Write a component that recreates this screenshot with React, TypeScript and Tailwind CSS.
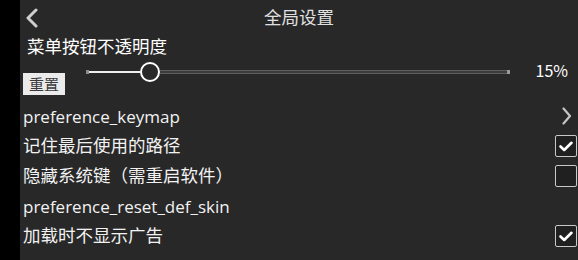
import React from 'react';

const FONT = { fontFamily: '"Open Sans", "Noto Sans CJK SC", sans-serif' };

type RowKind = 'arrow' | 'checked' | 'unchecked' | 'none';

interface PrefRow {
  id: string;
  label: string;
  kind: RowKind;
}

const ROWS: PrefRow[] = [
  { id: 'keymap', label: 'preference_keymap', kind: 'arrow' },
  { id: 'path', label: '记住最后使用的路径', kind: 'checked' },
  { id: 'syskey', label: '隐藏系统键（需重启软件）', kind: 'unchecked' },
  { id: 'skin', label: 'preference_reset_def_skin', kind: 'none' },
  { id: 'ads', label: '加载时不显示广告', kind: 'checked' },
];

const CheckBox = ({ checked }: { checked: boolean }) => (
  <div className="flex h-[22px] w-[22px] items-center justify-center rounded-[2px] border-[1.5px] border-[#c8c8c8] bg-[#202020]">
    {checked && (
      <svg width="14" height="11" viewBox="0 0 14 11" fill="none">
        <path d="M1.5 5.5 L5.2 9 L12.5 1.8" stroke="#ffffff" strokeWidth="2.6" strokeLinecap="round" strokeLinejoin="round" />
      </svg>
    )}
  </div>
);

const renderControl = (kind: RowKind) => {
  if (kind === 'arrow')
    return (
      <svg width="10" height="18" viewBox="0 0 10 18" fill="none" className="mr-[5px]">
        <path d="M1.5 1.5 L8 9 L1.5 16.5" stroke="#c4c4c4" strokeWidth="2.2" strokeLinecap="round" strokeLinejoin="round" />
      </svg>
    );
  if (kind === 'checked') return <CheckBox checked />;
  if (kind === 'unchecked') return <CheckBox checked={false} />;
  return null;
};

export default function App() {
  return (
    <div className="flex h-[260px] w-[578px] overflow-hidden bg-black text-[#f2f2f2]" style={FONT}>
      <div className="w-[20px] shrink-0 bg-black" />
      <div className="flex flex-1 flex-col bg-[#282828]">
        {/* header */}
        <div className="grid h-[35px] grid-cols-[40px_1fr_40px] items-center">
          <div className="pl-[5px] pt-[1px]">
            <svg width="14" height="20" viewBox="0 0 14 20" fill="none">
              <path d="M11 2 L3 10 L11 18" stroke="#cfcfcf" strokeWidth="3" strokeLinecap="round" strokeLinejoin="round" />
            </svg>
          </div>
          <div className="text-center text-[17.5px] leading-none text-[#e0e0e0]">全局设置</div>
          <div />
        </div>

        {/* opacity label */}
        <div className="pl-[7px] text-[17.5px] leading-[22px] text-white">菜单按钮不透明度</div>

        {/* slider row */}
        <div className="flex h-[44px] items-start pl-[3px]">
          <button className="mt-[16px] h-[22px] w-[42px] bg-[#ebebeb] text-[15px] leading-[22px] text-[#3a3a3a]">
            重置
          </button>
          <div className="ml-[21px] mt-[5px] flex h-[20px] w-[424px] items-center">
            <div className="h-[4px] w-[3px] bg-[#8a8a8a]" />
            <div className="h-[2px] w-[51px] bg-[#f0f0f0]" />
            <div className="h-[20px] w-[20px] shrink-0 rounded-full border-[2.5px] border-white bg-[#282828]" />
            <div className="h-[4px] flex-1 border-y border-[#5e5e5e] bg-[#3c3c3c]" />
            <div className="h-[4px] w-[3px] bg-[#9a9a9a]" />
          </div>
          <div
            className="ml-auto mr-[10px] mt-[2px] text-[16px] leading-[22px] text-white"
            style={{ fontFamily: '"Noto Sans CJK SC", "Noto Sans", sans-serif' }}
          >
            15%
          </div>
        </div>

        {/* preference rows */}
        <div className="flex flex-col">
          {ROWS.map((row) => (
            <div key={row.id} className="flex h-[30px] items-center justify-between pl-[3px] pr-[1px]">
              <span className={/^[\x00-\x7f]+$/.test(row.label) ? 'text-[17px] leading-none' : 'text-[17.5px] leading-none'}>
                {row.label}
              </span>
              {renderControl(row.kind)}
            </div>
          ))}
        </div>
      </div>
    </div>
  );
}
